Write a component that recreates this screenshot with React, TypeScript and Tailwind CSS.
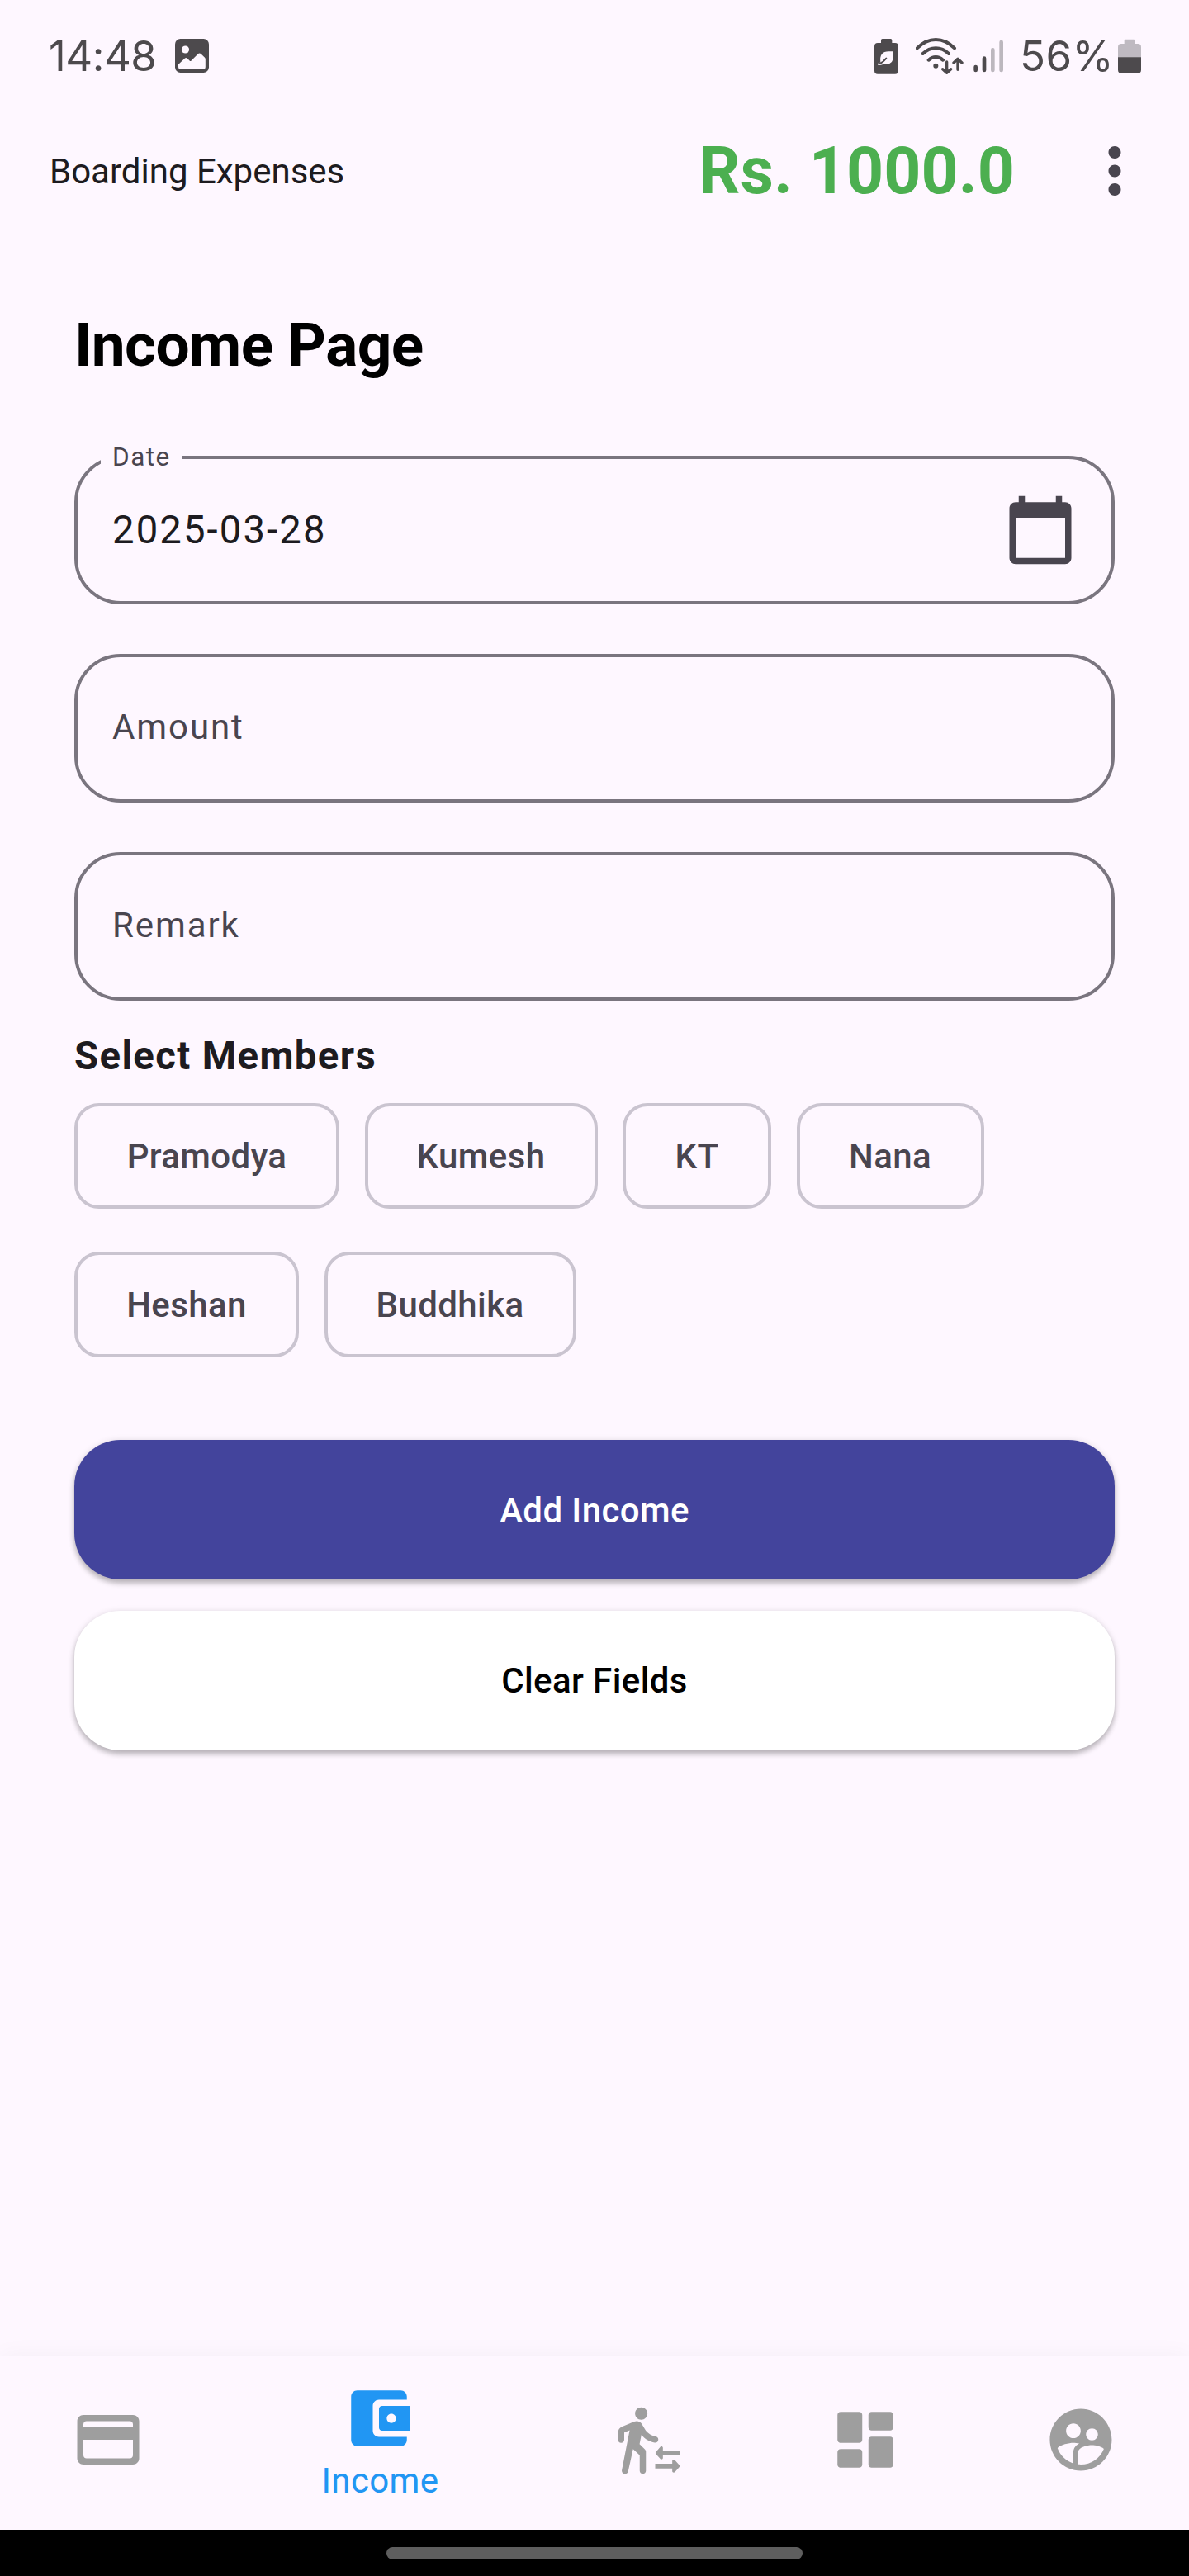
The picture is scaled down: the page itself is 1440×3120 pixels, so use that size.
import type { ReactNode } from "react";

const members = [
  { name: "Pramodya", width: "w-[321px]" },
  { name: "Kumesh", width: "w-[282px]" },
  { name: "KT", width: "w-[180px]" },
  { name: "Nana", width: "w-[227px]" },
  { name: "Heshan", width: "w-[272px]" },
  { name: "Buddhika", width: "w-[305px]" },
];

function Icon({ d, className }: { d: string; className: string }) {
  return (
    <svg viewBox="0 0 24 24" fill="currentColor" fillRule="evenodd" className={`size-[90px] shrink-0 ${className}`}>
      <path d={d} />
    </svg>
  );
}

const paths = {
  more: "M12 8c1.1 0 2-.9 2-2s-.9-2-2-2-2 .9-2 2 .9 2 2 2zm0 2c-1.1 0-2 .9-2 2s.9 2 2 2 2-.9 2-2-.9-2-2-2zm0 6c-1.1 0-2 .9-2 2s.9 2 2 2 2-.9 2-2-.9-2-2-2z",
  calendar:
    "M20 3h-1V1h-2v2H7V1H5v2H4c-1.1 0-2 .9-2 2v16c0 1.1.9 2 2 2h16c1.1 0 2-.9 2-2V5c0-1.1-.9-2-2-2zm0 18H4V8h16v13z",
  card: "M20 4H4c-1.11 0-1.99.89-1.99 2L2 18c0 1.11.89 2 2 2h16c1.11 0 2-.89 2-2V6c0-1.11-.89-2-2-2zm-1 14H5c-.55 0-1-.45-1-1v-5h16v5c0 .55-.45 1-1 1zm1-10H4V7c0-.55.45-1 1-1h14c.55 0 1 .45 1 1v1z",
  wallet:
    "M10 16V8c0-1.1.89-2 2-2h9V5c0-1.1-.9-2-2-2H5c-1.11 0-2 .9-2 2v14c0 1.1.89 2 2 2h14c1.1 0 2-.9 2-2v-1h-9c-1.11 0-2-.9-2-2zm3-8c-.55 0-1 .45-1 1v6c0 .55.45 1 1 1h9V8h-9zm3 5.5c-.83 0-1.5-.67-1.5-1.5s.67-1.5 1.5-1.5 1.5.67 1.5 1.5-.67 1.5-1.5 1.5z",
  transfer:
    "M9.5 5.5c1.1 0 2-.9 2-2s-.9-2-2-2-2 .9-2 2 .9 2 2 2zM5.75 8.9L3.23 21.81c-.12.62.35 1.19.98 1.19h.08c.47 0 .88-.33.98-.79L6.85 15 9 17v5c0 .55.45 1 1 1s1-.45 1-1v-6.14c0-.27-.11-.52-.29-.71L8.95 13.4l.6-3c1.07 1.32 2.58 2.23 4.31 2.51.6.1 1.14-.39 1.14-1 0-.49-.36-.9-.84-.98-1.53-.25-2.8-1.16-3.51-2.39l-.95-1.6C9.35 6.35 8.7 6 8 6c-.25 0-.5.05-.75.15L3.22 7.79C2.48 8.1 2 8.82 2 9.63V12c0 .55.45 1 1 1s1-.45 1-1V9.65l1.75-.75zM16.49 15.5v-.89c0-.4-.5-.6-.8-.33l-1.45 1.62c-.18.2-.18.5 0 .7l1.45 1.62c.3.27.8.07.8-.33V17H22v-1.5zM19.51 19.75v-.89c0-.4.5-.6.8-.33l1.45 1.62c.18.2.18.5 0 .7l-1.45 1.62c-.3.27-.8.07-.8-.33v-.89H14v-1.5z",
  dashboard:
    "M4 13h6c.55 0 1-.45 1-1V4c0-.55-.45-1-1-1H4c-.55 0-1 .45-1 1v8c0 .55.45 1 1 1zm0 8h6c.55 0 1-.45 1-1v-4c0-.55-.45-1-1-1H4c-.55 0-1 .45-1 1v4c0 .55.45 1 1 1zm10 0h6c.55 0 1-.45 1-1v-8c0-.55-.45-1-1-1h-6c-.55 0-1 .45-1 1v8c0 .55.45 1 1 1zM13 4v4c0 .55.45 1 1 1h6c.55 0 1-.45 1-1V4c0-.55-.45-1-1-1h-6c-.55 0-1 .45-1 1z",
  people:
    "M11.99 2c-5.52 0-10 4.48-10 10s4.48 10 10 10 10-4.48 10-10-4.48-10-10-10zm3.61 6.34c1.07 0 1.93.86 1.93 1.93 0 1.07-.86 1.93-1.93 1.93-1.07 0-1.93-.86-1.93-1.93-.01-1.07.86-1.93 1.93-1.93zm-6-1.58c1.3 0 2.36 1.06 2.36 2.36 0 1.3-1.06 2.36-2.36 2.36s-2.36-1.06-2.36-2.36c0-1.31 1.05-2.36 2.36-2.36zm0 9.13v3.75c-2.4-.75-4.3-2.6-5.14-4.96 1.05-1.12 3.67-1.69 5.14-1.69.53 0 1.2.08 1.9.22-1.64.87-1.9 2.02-1.9 2.68zM11.99 20c-.27 0-.53-.01-.79-.04v-4.07c0-1.42 2.94-2.13 4.4-2.13 1.07 0 2.92.39 3.84 1.15-1.17 2.97-4.06 5.09-7.45 5.09z",
};

function StatusBar() {
  return (
    <header className="flex h-[135px] shrink-0 items-center justify-between pr-[58px] pl-[59px] text-[#4d4a4d]">
      <div className="flex items-center">
        <span className="w-[153px] font-[Inter] text-[51px] leading-[60px] tracking-[-0.5px]">14:48</span>
        <svg viewBox="0 0 41 41" className="size-[41px]">
          <rect width="41" height="41" rx="6.5" fill="currentColor" />
          <circle cx="12.5" cy="13" r="4.6" fill="#fef7ff" />
          <path
            d="M4 31l8-7.4q1.3-1 2.6 0l3 3q1 1 2 0l8-8q2-2 4 0l4.2 4q1 1 1 2.200V34q0 3-3 3H7q-3 0-3-3z"
            fill="#fef7ff"
          />
        </svg>
      </div>
      <div className="flex items-center">
        <svg viewBox="114 75 87 132" className="h-[44px] w-[29px]">
          <path
            d="M143 78h30q5 0 5 5v10h11q12 0 12 12v89q0 12-12 12h-63q-12 0-12-12v-89q0-12 12-12h12V83q0-5 5-5z"
            fill="currentColor"
          />
          <path d="M136 163q-5-39 30-39h17v16q0 35-35 30q-10 4-21 4v-7q6 0 9-4z" fill="#fef7ff" />
          <path d="M134 168q12-5 23-19" fill="none" stroke="currentColor" strokeWidth="6" strokeLinecap="round" />
        </svg>
        <svg
          viewBox="264 75 174 132"
          className="ml-[21px] h-[44px] w-[58px]"
          fill="none"
          stroke="currentColor"
          strokeLinecap="round"
          strokeLinejoin="round"
        >
          <path d="M269 112q31-31 68-31t68 31M290 132q21-20 47-20t47 20M311 155q12-11 26-11t26 11" strokeWidth="12" />
          <circle cx="337" cy="176" r="9" fill="currentColor" stroke="none" />
          <path d="M377 162v40M362 188l15 14l15-14M417 190v-39M402 165l15-14l15 14" strokeWidth="10" />
        </svg>
        <svg viewBox="475 75 111 132" className="ml-[12px] h-[44px] w-[37px]" fill="none" strokeWidth="14" strokeLinecap="round">
          <path d="M483 180v12M514 149v43" stroke="currentColor" />
          <path d="M545 118v74M576 90v102" stroke="#bcb7be" />
        </svg>
        <span className="ml-[19px] w-[119px] font-[Inter] text-[51px] leading-[60px] tracking-[0.4px]">56%</span>
        <svg viewBox="1002 75 84 132" className="h-[44px] w-[28px]">
          <path
            d="M1029 80h30q4 0 4 4v12h11q12 0 12 12v38h-84v-38q0-12 12-12h11V84q0-4 4-4z"
            fill="#bfbac1"
          />
          <path d="M1002 145h84v46q0 12-12 12h-60q-12 0-12-12z" fill="currentColor" />
        </svg>
      </div>
    </header>
  );
}

function Field({ children }: { children: ReactNode }) {
  return (
    <div className="relative flex h-[180px] items-center justify-between rounded-[56px] border-4 border-[#7a757f] pr-[41px] pl-[42px]">
      {children}
    </div>
  );
}

function NavItem({ icon, label }: { icon: string; label?: string }) {
  return label ? (
    <div className="flex w-[394px] flex-col items-center pt-[30px] text-[#2196f3]">
      <Icon d={icon} className="" />
      <span className="mt-[3px] pl-[4px] text-[42px] leading-[56px] tracking-[0.4px]">{label}</span>
    </div>
  ) : (
    <div className="flex flex-1 justify-center pt-[56px] text-[#9e9e9e]">
      <Icon d={icon} className="" />
    </div>
  );
}

export default function App() {
  return (
    <div className="flex h-[3120px] w-[1440px] flex-col overflow-hidden bg-[#fef7ff] font-[Roboto,sans-serif] text-[#1d1b20]">
      <StatusBar />
      <div className="flex h-[144px] shrink-0 items-center pr-[45px] pl-[60px]">
        <span className="pt-[2px] text-[42px] leading-[50px]">Boarding Expenses</span>
        <span className="ml-auto text-[78.750px] leading-[90px] font-bold tracking-[0.1px] text-[#4caf50]">Rs. 1000.0</span>
        <Icon d={paths.more} className="ml-[76px] text-[#49454f]" />
      </div>

      <main className="flex flex-1 flex-col px-[90px] pt-[96px]">
        <h1 className="h-[86px] text-[73px] leading-[86px] font-bold tracking-[-0.6px] text-black">Income Page</h1>

        <div className="mt-[91px] flex flex-col gap-[60px]">
          <Field>
            <span className="absolute top-[-21px] left-[28px] w-[98px] bg-[#fef7ff] pl-[14px] text-[31.500px] leading-[37px] tracking-[1.5px] text-[#49454f]">
              Date
            </span>
            <span className="text-[47.250px] leading-[56px] tracking-[2.1px]">2025-03-28</span>
            <Icon d={paths.calendar} className="text-[#49454f]" />
          </Field>
          <Field>
            <span className="pb-[3px] text-[42px] leading-[56px] tracking-[1.9px] text-[#49454f]">Amount</span>
          </Field>
          <Field>
            <span className="pb-[3px] text-[42px] leading-[56px] tracking-[1.9px] text-[#49454f]">Remark</span>
          </Field>
        </div>

        <h2 className="mt-[39px] text-[47.250px] leading-[56px] font-bold tracking-[1.4px]">Select Members</h2>
        <div className="mt-[29px] flex flex-wrap gap-x-[30.5px] gap-y-[52px]">
          {members.map((m) => (
            <button
              key={m.name}
              className={`flex h-[128px] items-center justify-center rounded-[30px] border-4 border-[#cac4d0] pt-[2px] text-[42px] leading-[56px] font-medium tracking-[0.4px] text-[#49454f] ${m.width}`}
            >
              {m.name}
            </button>
          ))}
        </div>

        <button className="mt-[100px] h-[169px] rounded-[56px] bg-[#43449c] pt-[2px] text-[42px] font-medium tracking-[0.4px] text-white shadow-[0_5px_6px_rgba(0,0,0,0.22),0_1px_8px_rgba(0,0,0,0.12)]">
          Add Income
        </button>
        <button className="mt-[37.5px] h-[169px] rounded-[56px] bg-white text-[42px] font-medium tracking-[0.4px] text-black shadow-[0_5px_6px_rgba(0,0,0,0.22),0_1px_8px_rgba(0,0,0,0.12)]">
          Clear Fields
        </button>
      </main>

      <nav className="flex h-[210px] shrink-0 bg-[#fef7ff] shadow-[0_0_28px_rgba(0,0,0,0.045)]">
        <NavItem icon={paths.card} />
        <NavItem icon={paths.wallet} label="Income" />
        <NavItem icon={paths.transfer} />
        <NavItem icon={paths.dashboard} />
        <NavItem icon={paths.people} />
      </nav>
      <footer className="z-10 flex h-[56px] shrink-0 justify-center bg-black pt-[21px]">
        <div className="h-[15px] w-[504px] rounded-full bg-[#5e5e5e]" />
      </footer>
    </div>
  );
}
